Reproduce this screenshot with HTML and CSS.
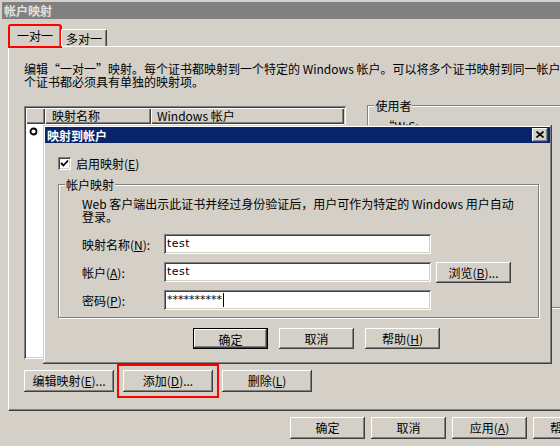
FILE: index.html
```html
<!DOCTYPE html>
<html lang="zh-CN">
<head>
<meta charset="utf-8">
<title>帐户映射</title>
<link rel="stylesheet" href="styles.css">
</head>
<body>
<div class="window">
  <div class="titlebar">帐户映射</div>
  <div class="tabs">
    <div class="tab tab-active marked-tab">一对一</div>
    <div class="tab">多对一</div>
  </div>
  <div class="panel">
    <div class="desc">
      <div class="line">编辑“一对一”映射。每个证书都映射到一个特定的 Windows 帐户。可以将多个证书映射到同一帐户，但每</div>
      <div class="line">个证书都必须具有单独的映射项。</div>
    </div>
    <div class="content">
      <div class="listview">
        <div class="lv-header">
          <div class="lv-col lv-col0"></div>
          <div class="lv-col lv-col1">映射名称</div>
          <div class="lv-col lv-col2">Windows 帐户</div>
        </div>
        <div class="lv-row">
          <svg class="lv-icon" width="9" height="9" viewBox="0 0 9 9"><circle cx="4.5" cy="4.5" r="3" fill="#fff" stroke="#000" stroke-width="1.8"/></svg>
        </div>
      </div>
      <div class="group user-group">
        <div class="group-label">使用者</div>
        <div class="user-text">“W:S: —</div>
      </div>
    </div>
    <div class="btn-row">
      <div class="btn btn-wide">编辑映射(<u>E</u>)...</div>
      <div class="btn btn-wide marked-btn">添加(<u>D</u>)...</div>
      <div class="btn btn-wide">删除(<u>L</u>)</div>
    </div>
  </div>
  <div class="footer">
    <div class="btn">确定</div>
    <div class="btn">取消</div>
    <div class="btn">应用(<u>A</u>)</div>
    <div class="btn">帮助(<u>H</u>)</div>
  </div>

  <div class="dialog">
    <div class="dlg-title">
      <span>映射到帐户</span>
      <div class="close-btn">
        <svg width="8" height="7" viewBox="0 0 8 7"><path d="M0.5 0.5 L7.5 6.5 M7.5 0.5 L0.5 6.5" stroke="#000" stroke-width="1.6" fill="none"/></svg>
      </div>
    </div>
    <div class="dlg-body">
      <div class="check-row">
        <div class="checkbox">
          <svg width="9" height="9" viewBox="0 0 9 9"><path d="M1 4 L3.5 6.5 L8 1.5" stroke="#000" stroke-width="1.8" fill="none"/></svg>
        </div>
        <span>启用映射(<u>E</u>)</span>
      </div>
      <div class="group map-group">
        <div class="group-label">帐户映射</div>
        <div class="map-desc">
          <div class="line">Web 客户端出示此证书并经过身份验证后，用户可作为特定的 Windows 用户自动</div>
          <div class="line">登录。</div>
        </div>
        <div class="form">
          <div class="form-row">
            <div class="form-label">映射名称(<u>N</u>):</div>
            <div class="field">test</div>
          </div>
          <div class="form-row">
            <div class="form-label">帐户(<u>A</u>):</div>
            <div class="field">test</div>
            <div class="btn browse-btn">浏览(<u>B</u>)...</div>
          </div>
          <div class="form-row">
            <div class="form-label">密码(<u>P</u>):</div>
            <div class="field field-pass">**********<span class="caret"></span></div>
          </div>
        </div>
      </div>
      <div class="dlg-buttons">
        <div class="btn btn-default">确定</div>
        <div class="btn">取消</div>
        <div class="btn">帮助(<u>H</u>)</div>
      </div>
    </div>
  </div>
</div>
</body>
</html>
```

FILE: styles.css
```css
html, body {
  margin: 0;
  padding: 0;
}
body {
  width: 560px;
  height: 446px;
  overflow: hidden;
  background: #d4d0c8;
  font-family: "Noto Sans CJK SC", "DejaVu Sans", sans-serif;
  font-size: 12px;
  line-height: 13px;
  color: #000;
}
u {
  text-decoration: underline;
  text-underline-offset: 1px;
}
.window {
  position: relative;
  width: 640px;
  height: 446px;
}
.titlebar {
  margin: 2px 0 0 2px;
  height: 17px;
  background: #808080;
  color: #e4e2dc;
  font-weight: bold;
  line-height: 17px;
  padding-left: 2px;
}
.tabs {
  display: flex;
  align-items: flex-end;
  height: 27px;
  padding-left: 9px;
  position: relative;
  z-index: 2;
}
.tab {
  height: 17px;
  width: 46px;
  box-sizing: border-box;
  text-align: center;
  line-height: 17px;
  border-top: 1px solid #fff;
  border-left: 1px solid #fff;
  border-right: 1px solid #404040;
  box-shadow: inset -1px 0 #808080;
  border-radius: 2px 2px 0 0;
  background: #d4d0c8;
}
.tab-active {
  height: 22px;
  width: 52px;
  margin-bottom: -1px;
  line-height: 20px;
}
.marked-tab {
  outline: 2px solid #ff0000;
  outline-offset: -1px;
}
.panel {
  margin-left: 8px;
  width: 620px;
  height: 365px;
  box-sizing: border-box;
  border-top: 1px solid #fff;
  border-left: 1px solid #fff;
  border-right: 1px solid #404040;
  border-bottom: 1px solid #404040;
  box-shadow: inset -1px -1px #808080;
  padding: 15px 0 0 15px;
}
.line {
  white-space: nowrap;
  height: 13px;
}
.content {
  display: flex;
  margin-top: 17px;
}
.listview {
  margin-top: 1px;
  width: 323px;
  height: 253px;
  box-sizing: border-box;
  background: #fff;
  box-shadow: inset 1px 1px #808080, inset -1px -1px #fff, inset 2px 2px #404040, inset -2px -2px #d4d0c8;
  padding: 2px;
}
.lv-header {
  display: flex;
  height: 16px;
}
.lv-col {
  box-sizing: border-box;
  height: 16px;
  background: #d4d0c8;
  box-shadow: inset 1px 1px #fff, inset -1px -1px #404040, inset -2px -2px #808080;
  line-height: 16px;
  padding-left: 7px;
  white-space: nowrap;
}
.lv-col0 { width: 19px; }
.lv-col1 { width: 106px; }
.lv-col2 { flex: 1; padding-left: 6px; }
.lv-row {
  height: 16px;
  padding: 3px 0 0 3px;
  box-sizing: border-box;
}
.lv-icon { display: block; }
.group {
  position: relative;
  border: 1px solid #808080;
  box-shadow: inset 1px 1px #fff, 1px 1px #fff;
}
.group-label {
  position: absolute;
  top: -7px;
  left: 6px;
  padding: 0 1px;
  background: #d4d0c8;
  line-height: 13px;
  white-space: nowrap;
}
.user-group {
  margin-left: 21px;
  width: 260px;
  height: 203px;
  box-sizing: border-box;
}
.user-text {
  padding: 13px 0 0 14px;
}
.btn-row {
  display: flex;
  gap: 9px;
  margin-top: 11px;
}
.btn {
  box-sizing: border-box;
  width: 75px;
  height: 22px;
  line-height: 22px;
  text-align: center;
  white-space: nowrap;
  background: #d4d0c8;
  box-shadow: inset -1px -1px #404040, inset 1px 1px #fff, inset -2px -2px #808080;
}
.btn-wide { width: 90px; }
.marked-btn {
  outline: 2px solid #ff0000;
  outline-offset: 4px;
}
.footer {
  display: flex;
  justify-content: flex-end;
  gap: 6px;
  margin-top: 6px;
  padding-right: 32px;
}
.footer .btn { height: 22px; }

.dialog {
  position: absolute;
  left: 43px;
  top: 123px;
  width: 509px;
  height: 239px;
  box-sizing: border-box;
  background: #d4d0c8;
  box-shadow: inset -1px -1px #404040, inset 1px 1px #d4d0c8, inset -2px -2px #808080, inset 2px 2px #fff;
  padding: 2px;
  z-index: 5;
}
.dlg-title {
  display: flex;
  align-items: center;
  justify-content: space-between;
  height: 16px;
  background: #0a246a;
  color: #fff;
  font-weight: bold;
  padding: 0 2px;
}
.close-btn {
  width: 16px;
  height: 14px;
  box-sizing: border-box;
  background: #d4d0c8;
  box-shadow: inset -1px -1px #404040, inset 1px 1px #fff, inset -2px -2px #808080;
  display: flex;
  align-items: center;
  justify-content: center;
  padding: 0 1px 1px 0;
}
.close-btn svg { display: block; }
.dlg-body {
  padding: 14px 0 0 13px;
}
.check-row {
  display: flex;
  align-items: center;
  gap: 5px;
  height: 13px;
}
.checkbox {
  width: 13px;
  height: 13px;
  box-sizing: border-box;
  background: #fff;
  box-shadow: inset 1px 1px #808080, inset -1px -1px #fff, inset 2px 2px #404040, inset -2px -2px #d4d0c8;
  display: flex;
  align-items: center;
  justify-content: center;
}
.checkbox svg { display: block; }
.map-group {
  margin-top: 14px;
  width: 481px;
  height: 134px;
  box-sizing: border-box;
  padding: 12px 0 0 23px;
}
.form {
  display: flex;
  flex-direction: column;
  gap: 8px;
  margin-top: 11px;
}
.form-row {
  display: flex;
  align-items: center;
  height: 20px;
}
.form-label {
  width: 82px;
  white-space: nowrap;
}
.field {
  width: 267px;
  height: 20px;
  box-sizing: border-box;
  background: #fff;
  box-shadow: inset 1px 1px #808080, inset -1px -1px #fff, inset 2px 2px #404040, inset -2px -2px #d4d0c8;
  padding: 0 3px;
  line-height: 20px;
  font-family: "DejaVu Sans", sans-serif;
  font-size: 11px;
  letter-spacing: 0.5px;
  display: flex;
  align-items: center;
}
.field-pass { letter-spacing: 0; font-size: 11px; }
.caret {
  display: inline-block;
  width: 1px;
  height: 14px;
  background: #000;
  margin-left: 1px;
}
.browse-btn {
  margin-left: 5px;
  height: 21px;
  line-height: 21px;
}
.dlg-buttons {
  display: flex;
  gap: 11px;
  margin: 10px 0 0 135px;
}
.dlg-buttons .btn { height: 21px; line-height: 21px; }
.btn-default {
  border: 1px solid #000;
  box-shadow: inset -1px -1px #404040, inset 1px 1px #fff, inset -2px -2px #808080;
}
```
